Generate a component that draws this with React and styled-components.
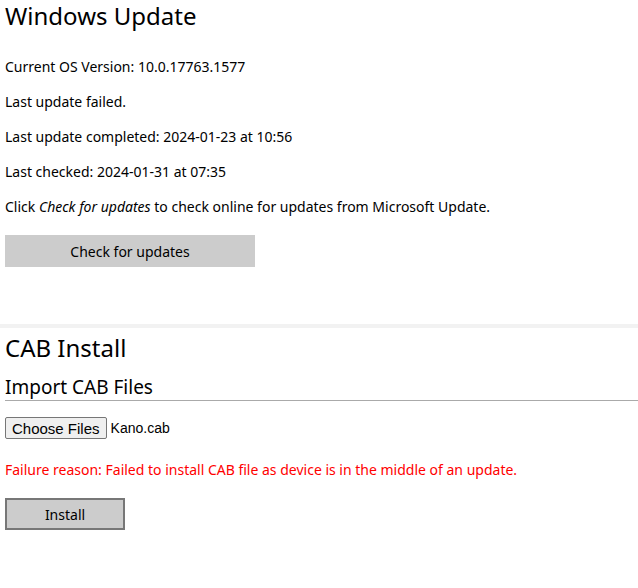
import React from "react";
import styled, { createGlobalStyle } from "styled-components";

const GlobalStyle = createGlobalStyle`
  body {
    margin: 0;
    background: #fff;
    color: #000;
    font-family: "Noto Sans", "Open Sans", sans-serif;
  }
`;

const Section = styled.section`
  padding-left: 5px;
  padding-bottom: ${(props) => props.bottom || 0}px;
`;

const Title = styled.h1`
  margin: ${(props) => props.top || 0}px 0 0 0;
  font-size: 24px;
  font-weight: 400;
  line-height: 32px;
`;

const SubTitle = styled.h2`
  margin: 10px 0 0 0;
  font-size: 19px;
  font-weight: 400;
  line-height: 26px;
  border-bottom: 1px solid #aaa;
`;

const Info = styled.p`
  margin: ${(props) => (props.error ? 21 : 15)}px 0 0 0;
  font-size: 14px;
  line-height: 20px;
  color: ${(props) => (props.error ? "#ff0000" : "#000")};
`;

const Lines = styled.div`
  padding-top: 10px;
`;

const WideButton = styled.button`
  display: block;
  margin-top: 18px;
  width: 250px;
  height: 32px;
  border: none;
  background: #cccccc;
  font-family: inherit;
  font-size: 14px;
  color: #000;
  cursor: pointer;
`;

const FileRow = styled.div`
  display: flex;
  align-items: center;
  gap: 4px;
  margin-top: 16px;
  font-family: "Liberation Sans", Arial, sans-serif;
`;

const FileButton = styled.button`
  height: 22px;
  padding: 0 6px;
  border: 1px solid #767676;
  border-radius: 2px;
  background: #efefef;
  font-family: inherit;
  font-size: 15px;
  color: #000;
`;

const FileName = styled.span`
  font-size: 14px;
`;

const InstallButton = styled.button`
  display: block;
  margin-top: 18px;
  width: 120px;
  height: 32px;
  border: 2px solid #777;
  background: #cccccc;
  font-family: inherit;
  font-size: 14px;
  color: #000;
`;

const Divider = styled.div`
  height: 4px;
  background: #f2f2f2;
`;

export default function App() {
  return (
    <>
      <GlobalStyle />
      <Section bottom={57}>
        <Title>Windows Update</Title>
        <Lines>
          <Info>Current OS Version: 10.0.17763.1577</Info>
          <Info>Last update failed.</Info>
          <Info>Last update completed: 2024-01-23 at 10:56</Info>
          <Info>Last checked: 2024-01-31 at 07:35</Info>
          <Info>
            Click <em>Check for updates</em> to check online for updates from
            Microsoft Update.
          </Info>
        </Lines>
        <WideButton>Check for updates</WideButton>
      </Section>
      <Divider />
      <Section bottom={40}>
        <Title top={4}>CAB Install</Title>
        <SubTitle>Import CAB Files</SubTitle>
        <FileRow>
          <FileButton>Choose Files</FileButton>
          <FileName>Kano.cab</FileName>
        </FileRow>
        <Info error>
          Failure reason: Failed to install CAB file as device is in the middle
          of an update.
        </Info>
        <InstallButton>Install</InstallButton>
      </Section>
    </>
  );
}
